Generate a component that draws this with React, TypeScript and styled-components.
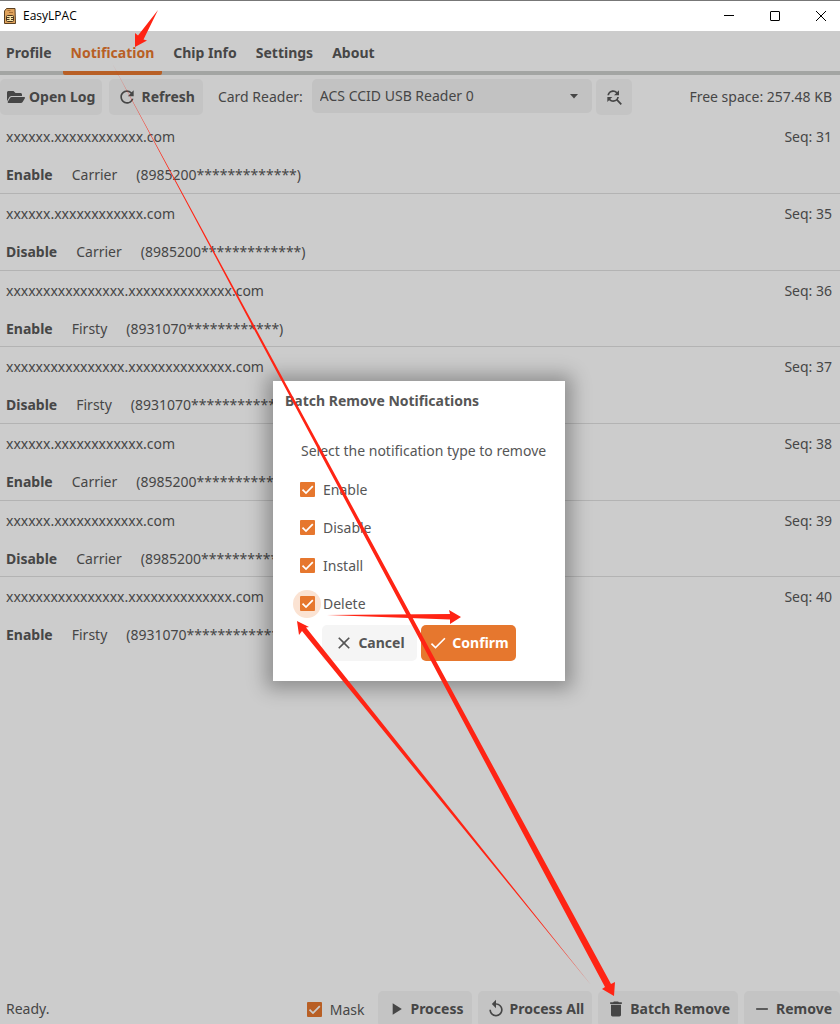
import React, { useId } from "react";
import styled, { createGlobalStyle, css } from "styled-components";
import {
  MdCheck,
  MdClose,
  MdDelete,
  MdFindReplace,
  MdPlayArrow,
  MdRefresh,
  MdRemove,
  MdReplay,
} from "react-icons/md";
import { FaFolderOpen } from "react-icons/fa";

const color = {
  page: "#cccccc",
  text: "#464646",
  button: "#c4c4c4",
  field: "#c2c2c2",
  line: "#b3b3b3",
  track: "#a3a5a3",
  accentDim: "#b85f25",
  accent: "#e6772e",
  dialogText: "#565656",
  arrow: "#ff2414",
};

const GlobalStyle = createGlobalStyle`
  *, *::before, *::after { box-sizing: border-box; }
  body {
    margin: 0;
    background: ${color.page};
    color: ${color.text};
    font: 14px/18px "Noto Sans", "Open Sans", sans-serif;
    overflow: hidden;
  }
  button, input, select { font: inherit; color: inherit; margin: 0; }
`;

const Window = styled.div`
  position: relative;
  display: flex;
  flex-direction: column;
  height: 100vh;
  overflow: hidden;
`;

const TitleBar = styled.header`
  display: flex;
  align-items: center;
  flex: none;
  height: 31px;
  padding-left: 4px;
  border-top: 1px solid #777777;
  background: #ffffff;
  color: #000000;
  font-size: 12px;
`;

const AppName = styled.span`
  flex: 1;
  margin-left: 7px;
  font-family: "Open Sans", "Noto Sans", sans-serif;
`;

const WindowButton = styled.button`
  display: grid;
  place-items: center;
  width: 46px;
  height: 30px;
  padding: 0;
  border: 0;
  background: none;

  &:last-child {
    width: 42px;
    padding-left: 4px;
  }
`;

const Tabs = styled.nav`
  display: flex;
  gap: 3px;
  flex: none;
  height: 44px;
  margin-bottom: 4px;
  box-shadow: inset 0 -4px ${color.track};
`;

const Tab = styled.button<{ $active?: boolean }>`
  padding: 4px 8px 0;
  border: 0;
  border-bottom: 4px solid transparent;
  background: none;
  font-weight: 700;

  &:first-child {
    padding-left: 6px;
  }

  ${(p) =>
    p.$active &&
    css`
      color: ${color.accentDim};
      background: linear-gradient(${color.accentDim}, ${color.accentDim}) bottom / 100% 4px
        no-repeat border-box;
      border-radius: 2px;
    `}
`;

const Toolbar = styled.div`
  display: flex;
  align-items: center;
  flex: none;
  height: 36px;
  padding-right: 8px;
  margin-bottom: 2px;
`;

const Button = styled.button<{ $tone?: "light" | "accent" }>`
  display: flex;
  align-items: center;
  justify-content: center;
  gap: 4px;
  flex: none;
  height: 36px;
  padding: 0 8px;
  border: 0;
  border-radius: 5px;
  background: ${(p) =>
    p.$tone === "accent" ? color.accent : p.$tone === "light" ? "#f5f5f5" : color.button};
  color: ${(p) => (p.$tone === "accent" ? "#ffffff" : "inherit")};
  font-weight: 700;
  white-space: nowrap;

  svg {
    flex: none;
    width: 20px;
    height: 20px;
  }
`;

const LogButton = styled(Button)`
  padding: 0 7px;
  margin-right: 7px;

  svg {
    width: 18px;
  }
`;

const FieldLabel = styled.label`
  margin: 0 9px 0 15px;
  white-space: nowrap;
`;

const SelectBox = styled.div`
  display: grid;
  flex: 0 1 280px;
  align-self: flex-start;
  align-items: center;
  margin-right: 4px;

  > * {
    grid-area: 1 / 1;
  }

  svg {
    justify-self: end;
    margin-right: 13px;
    pointer-events: none;
  }
`;

const Select = styled.select`
  appearance: none;
  width: 100%;
  height: 34px;
  padding: 0 32px 0 8px;
  border: 0;
  border-radius: 5px;
  background: ${color.field};
`;

const FreeSpace = styled.span`
  margin-left: auto;
  white-space: nowrap;
`;

const List = styled.ul`
  flex: 1;
  min-height: 0;
  margin: 0;
  padding: 0;
  list-style: none;
`;

const Item = styled.li`
  height: 77px;
  padding: 0 8px 0 6px;

  &:nth-child(3n) {
    height: 76px;
  }

  &:not(:last-child) {
    border-bottom: 1px solid ${color.line};
  }
`;

const Line = styled.div`
  display: flex;
  gap: 19px;
  align-items: center;
  height: 38px;
  padding-top: 2px;

  &:first-child {
    justify-content: space-between;
  }
`;

const Footer = styled.footer`
  display: flex;
  align-items: flex-start;
  gap: 6px;
  flex: none;
  height: 33px;
  padding-left: 6px;
`;

const Status = styled.span`
  flex: 1;
  line-height: 36px;
`;

const MaskOption = styled.div`
  margin-right: 8px;
`;

const CheckLabel = styled.label`
  display: flex;
  align-items: center;
  gap: 8px;
  height: 38px;
`;

const CheckMark = styled.span`
  display: grid;
  place-items: center;
  margin-bottom: 1px;

  > * {
    grid-area: 1 / 1;
  }

  svg {
    pointer-events: none;
  }
`;

const CheckInput = styled.input<{ $dim?: boolean; $focused?: boolean }>`
  appearance: none;
  width: 15px;
  height: 15px;
  border-radius: 1px;
  background: ${(p) => (p.$dim ? color.accentDim : color.accent)};

  ${(p) =>
    p.$focused &&
    css`
      &::before {
        content: "";
        position: absolute;
        z-index: -1;
        width: 28px;
        height: 28px;
        margin: -6px -7px;
        border-radius: 50%;
        background: #fbe3d3;
      }
    `}
`;

const Overlay = styled.div`
  position: absolute;
  inset: 0;
  display: grid;
  place-items: center;
  padding: 38px 2px 0 0;
`;

const Dialog = styled.section`
  isolation: isolate;
  width: 292px;
  padding: 2px 12px 20px;
  background: #ffffff;
  color: ${color.dialogText};
  box-shadow: 0 1px 18px 7px rgba(0, 0, 0, 0.3);
`;

const DialogTitle = styled.h2`
  margin: 0 0 13px;
  font-size: 14px;
  line-height: 36px;
`;

const DialogBody = styled.div`
  padding-left: 15px;
`;

const Message = styled.p`
  margin: 0 0 1px 1px;
  line-height: 38px;
  white-space: nowrap;
`;

const Actions = styled.div`
  display: grid;
  grid-template-columns: 95px 95px;
  gap: 4px;
  justify-content: center;
  margin-top: 2px;
`;

const Arrows = styled.svg`
  position: absolute;
  top: 0;
  left: 0;
  pointer-events: none;
`;

const items = [
  { host: "xxxxxx.xxxxxxxxxxxx.com", seq: 31, action: "Enable", carrier: "Carrier", iccid: "(8985200*************)" },
  { host: "xxxxxx.xxxxxxxxxxxx.com", seq: 35, action: "Disable", carrier: "Carrier", iccid: "(8985200*************)" },
  { host: "xxxxxxxxxxxxxxxx.xxxxxxxxxxxxxx.com", seq: 36, action: "Enable", carrier: "Firsty", iccid: "(8931070************)" },
  { host: "xxxxxxxxxxxxxxxx.xxxxxxxxxxxxxx.com", seq: 37, action: "Disable", carrier: "Firsty", iccid: "(8931070************)" },
  { host: "xxxxxx.xxxxxxxxxxxx.com", seq: 38, action: "Enable", carrier: "Carrier", iccid: "(8985200*************)" },
  { host: "xxxxxx.xxxxxxxxxxxx.com", seq: 39, action: "Disable", carrier: "Carrier", iccid: "(8985200*************)" },
  { host: "xxxxxxxxxxxxxxxx.xxxxxxxxxxxxxx.com", seq: 40, action: "Enable", carrier: "Firsty", iccid: "(8931070************)" },
];

function CheckField({ label, dim, focused }: { label: string; dim?: boolean; focused?: boolean }) {
  const id = useId();
  return (
    <CheckLabel htmlFor={id}>
      <CheckMark>
        <CheckInput id={id} type="checkbox" defaultChecked $dim={dim} $focused={focused} />
        <svg width="15" height="15" viewBox="0 0 15 15" fill="none">
          <path d="M2.500 7.600 6 11.100l6.800-7" stroke={dim ? "#cccccc" : "#ffffff"} strokeWidth="1.700" />
        </svg>
      </CheckMark>
      {label}
    </CheckLabel>
  );
}

function CardIcon() {
  return (
    <svg width="12" height="16" viewBox="0 0 12 16">
      <path d="M2.500 .5H11l.5 15H.5V3z" fill="#e0a35c" stroke="#5b4020" />
      <path d="M3.500 2.500h3M5 4.500h4" stroke="#a86f35" />
      <rect x="2.500" y="7.500" width="7" height="6" rx="1" fill="#f6e3a4" stroke="#4a3520" />
      <path d="M3 9.500h2.500M3 11.500h2.500M7 9.500h2M7 11.500h2" stroke="#4a3520" />
    </svg>
  );
}

export default function App() {
  return (
    <>
      <GlobalStyle />
      <Window>
        <TitleBar>
          <CardIcon />
          <AppName>EasyLPAC</AppName>
          <WindowButton aria-label="Minimize">
            <svg width="10" height="10" viewBox="0 0 10 10" stroke="#000">
              <path d="M0 4.500h10" />
            </svg>
          </WindowButton>
          <WindowButton aria-label="Maximize">
            <svg width="10" height="10" viewBox="0 0 10 10" stroke="#000" fill="none">
              <rect x=".5" y=".5" width="9" height="9" rx=".5" />
            </svg>
          </WindowButton>
          <WindowButton aria-label="Close">
            <svg width="10" height="10" viewBox="0 0 10 10" stroke="#000">
              <path d="M0 0l10 10M10 0 0 10" />
            </svg>
          </WindowButton>
        </TitleBar>

        <Tabs>
          <Tab>Profile</Tab>
          <Tab $active>Notification</Tab>
          <Tab>Chip Info</Tab>
          <Tab>Settings</Tab>
          <Tab>About</Tab>
        </Tabs>

        <Toolbar>
          <LogButton>
            <FaFolderOpen />
            Open Log
          </LogButton>
          <Button>
            <MdRefresh />
            Refresh
          </Button>
          <FieldLabel htmlFor="reader">Card Reader:</FieldLabel>
          <SelectBox>
            <Select id="reader">
              <option>ACS CCID USB Reader 0</option>
            </Select>
            <svg width="10" height="5" viewBox="0 0 10 5" fill={color.text}>
              <path d="M1 0h8L5 4.500z" />
            </svg>
          </SelectBox>
          <Button aria-label="Rescan card readers">
            <MdFindReplace />
          </Button>
          <FreeSpace>Free space: 257.48 KB</FreeSpace>
        </Toolbar>

        <List>
          {items.map((item) => (
            <Item key={item.seq}>
              <Line>
                <span>{item.host}</span>
                <span>Seq: {item.seq}</span>
              </Line>
              <Line>
                <b>{item.action}</b>
                <span>{item.carrier}</span>
                <span>{item.iccid}</span>
              </Line>
            </Item>
          ))}
        </List>

        <Footer>
          <Status>Ready.</Status>
          <MaskOption>
            <CheckField label="Mask" dim />
          </MaskOption>
          <Button>
            <MdPlayArrow />
            Process
          </Button>
          <Button>
            <MdReplay />
            Process All
          </Button>
          <Button>
            <MdDelete />
            Batch Remove
          </Button>
          <Button>
            <MdRemove />
            Remove
          </Button>
        </Footer>

        <Overlay>
          <Dialog role="dialog" aria-labelledby="dialog-title">
            <DialogTitle id="dialog-title">Batch Remove Notifications</DialogTitle>
            <DialogBody>
              <Message>Select the notification type to remove</Message>
              <CheckField label="Enable" />
              <CheckField label="Disable" />
              <CheckField label="Install" />
              <CheckField label="Delete" focused />
            </DialogBody>
            <Actions>
              <Button $tone="light">
                <MdClose />
                Cancel
              </Button>
              <Button $tone="accent">
                <MdCheck />
                Confirm
              </Button>
            </Actions>
          </Dialog>
        </Overlay>

        <Arrows width="840" height="1024" viewBox="0 0 840 1024" fill={color.arrow} aria-hidden="true">
          <path d="M158 10 143.500 39.500 147 40.500 135 47 135 33 138 35.500z" />
          <path d="M112 63 611 984 615 982 614 996 602 989 605 987z" />
          <path d="M591 985 306 627.500 309 627 297 621 299 635 302 631z" />
          <path d="M327 615 450 614 449 610 461 617 450 624 450 619.500z" />
        </Arrows>
      </Window>
    </>
  );
}
